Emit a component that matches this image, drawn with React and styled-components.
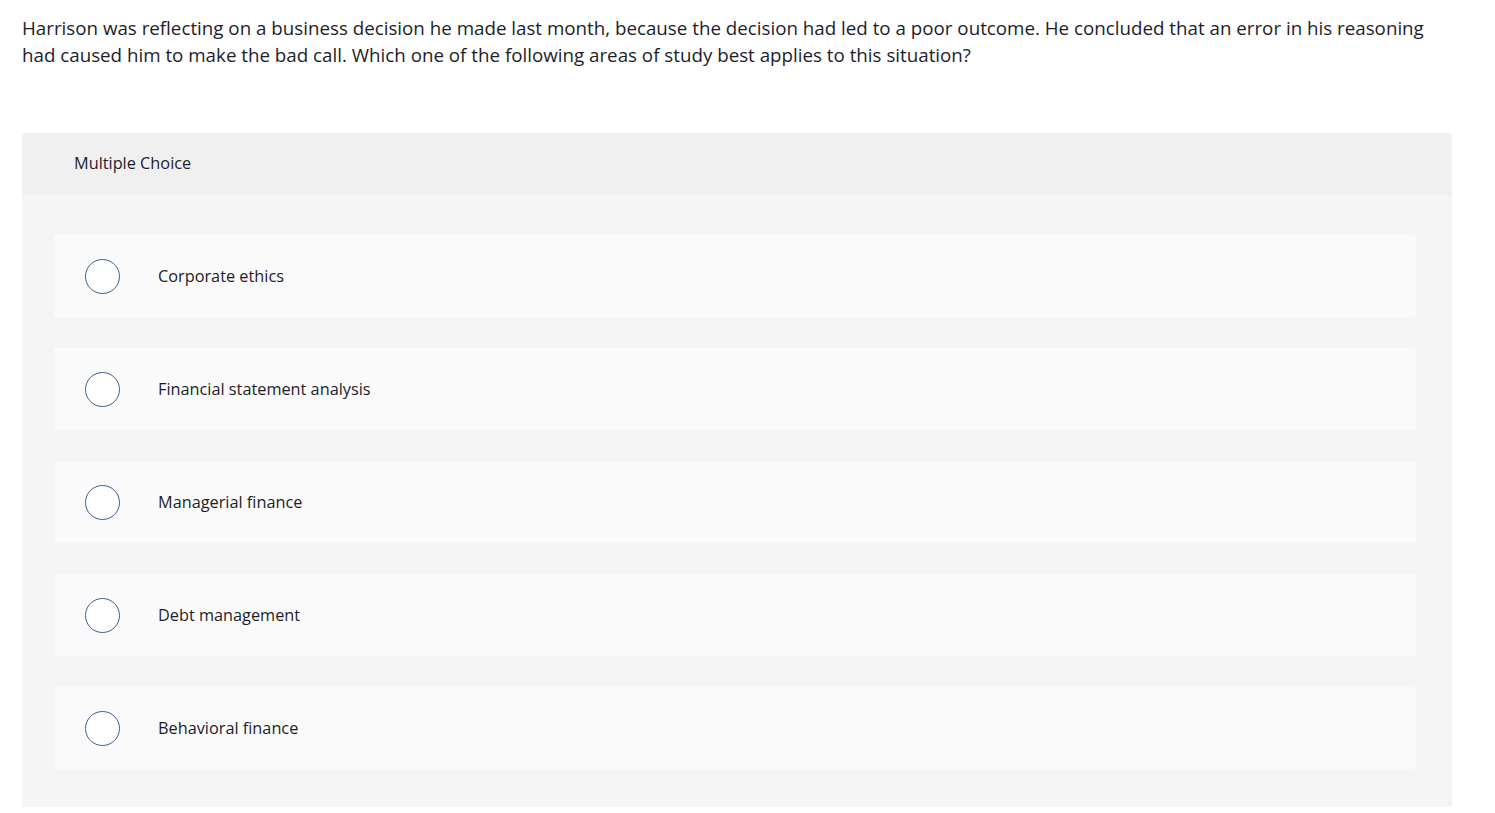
import React from "react";
import styled, { createGlobalStyle } from "styled-components";

const Global = createGlobalStyle`
  html, body { margin: 0; padding: 0; background: #ffffff; }
  body { font-family: "Open Sans", Lato, "Liberation Sans", sans-serif; color: #1d1d2b; }
`;

const Page = styled.div`
  padding: 14px 43px 0 22px;
`;

const Question = styled.p`
  margin: 0;
  font-size: 18.75px;
  line-height: 27px;
  color: #1d1d2b;
  max-width: 1420px;
`;

const Panel = styled.section`
  margin-top: 65px;
  width: 1430px;
  background: #f5f5f5;
  border-radius: 4px 4px 0 0;
`;

const PanelHeader = styled.div`
  height: 62px;
  background: #f0f0f0;
  border-radius: 4px 4px 0 0;
  display: flex;
  align-items: center;
  padding-left: 52px;
  padding-bottom: 2px;
  box-sizing: border-box;
  font-size: 16.3px;
  color: #1d1d2b;
`;

const OptionList = styled.div`
  display: flex;
  flex-direction: column;
  gap: 31px;
  padding: 40px 36px 38px 32px;
`;

const Option = styled.label`
  height: 82px;
  background: #fafafa;
  border-radius: 3px;
  display: flex;
  align-items: center;
  padding-left: 31px;
  cursor: pointer;
`;

const Radio = styled.span`
  width: 35px;
  height: 35px;
  box-sizing: border-box;
  border-radius: 50%;
  border: 1.5px solid #3a6290;
  background: #ffffff;
  flex: none;
`;

const OptionText = styled.span`
  margin-left: 38px;
  font-size: 16.3px;
  color: #1d1d2b;
`;

const options = [
  "Corporate ethics",
  "Financial statement analysis",
  "Managerial finance",
  "Debt management",
  "Behavioral finance",
];

export default function App() {
  return (
    <>
      <Global />
      <Page>
        <Question>
          Harrison was reflecting on a business decision he made last month, because the decision had led to a poor
          outcome. He concluded that an error in his reasoning had caused him to make the bad call. Which one of the
          following areas of study best applies to this situation?
        </Question>
        <Panel>
          <PanelHeader>Multiple Choice</PanelHeader>
          <OptionList>
            {options.map((o) => (
              <Option key={o}>
                <Radio />
                <OptionText>{o}</OptionText>
              </Option>
            ))}
          </OptionList>
        </Panel>
      </Page>
    </>
  );
}
